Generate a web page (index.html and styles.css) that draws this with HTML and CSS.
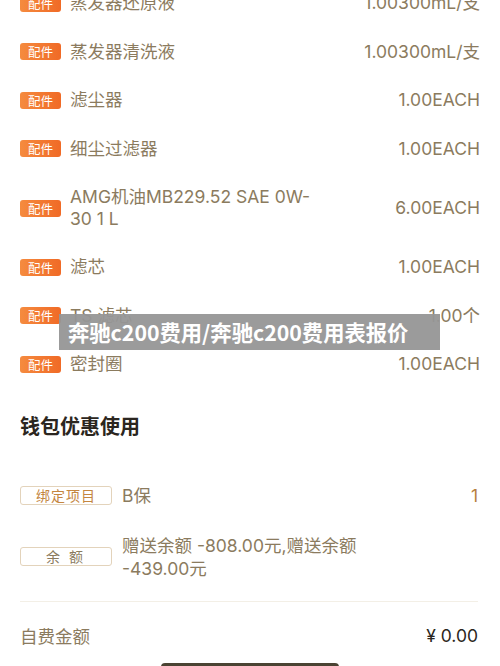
FILE: index.html
```html
<!DOCTYPE html>
<html lang="zh">
<head>
<meta charset="utf-8">
<link rel="stylesheet" href="styles.css">
</head>
<body>
<div class="page">
  <ul class="parts">
    <li class="part"><span class="badge">配件</span><span class="name">蒸发器还原液</span><span class="qty">1.00300mL/支</span></li>
    <li class="part"><span class="badge">配件</span><span class="name">蒸发器清洗液</span><span class="qty">1.00300mL/支</span></li>
    <li class="part"><span class="badge">配件</span><span class="name">滤尘器</span><span class="qty">1.00EACH</span></li>
    <li class="part"><span class="badge">配件</span><span class="name">细尘过滤器</span><span class="qty">1.00EACH</span></li>
    <li class="part"><span class="badge">配件</span><span class="name">AMG机油MB229.52 SAE 0W-30 1 L</span><span class="qty">6.00EACH</span></li>
    <li class="part"><span class="badge">配件</span><span class="name">滤芯</span><span class="qty">1.00EACH</span></li>
    <li class="part"><span class="badge">配件</span><span class="name">TS 滤芯</span><span class="qty">1.00个</span></li>
    <li class="part"><span class="badge">配件</span><span class="name">密封圈</span><span class="qty">1.00EACH</span></li>
  </ul>

  <h2 class="section-title">钱包优惠使用</h2>

  <div class="wallet">
    <div class="wallet-row"><span class="tag tag-bind">绑定项目</span><span class="wval">B保</span><span class="wnum">1</span></div>
    <div class="wallet-row"><span class="tag tag-bal">余 额</span><span class="wval">赠送余额 -808.00元,赠送余额<br>-439.00元</span></div>
  </div>

  <div class="total">
    <span class="total-label">自费金额</span>
    <span class="total-value">¥ 0.00</span>
  </div>

  <div class="home-bar"></div>

  <div class="banner">奔驰c200费用/奔驰c200费用表报价</div>
</div>
</body>
</html>
```

FILE: styles.css
```css
* { box-sizing: border-box; }
html, body { margin: 0; padding: 0; background: #fff; }
body {
  font-family: "Inter", "Noto Sans CJK SC", sans-serif;
  color: #8b7b5e;
  overflow: hidden;
  height: 666px;
}
.page {
  position: relative;
  width: 500px;
  height: 666px;
  overflow: hidden;
}
.parts {
  list-style: none;
  margin: -21px 0 0;
  padding: 0 20px;
}
.part {
  display: flex;
  align-items: center;
  padding: 13px 0;
  min-height: 48.5px;
  font-size: 17.5px;
  line-height: 22px;
}
.badge {
  flex: none;
  width: 41px;
  height: 17px;
  border-radius: 3px;
  background: linear-gradient(90deg, #f58b3f, #f06a26);
  color: #fff;
  font-family: "Noto Sans CJK SC", sans-serif;
  font-size: 12.5px;
  line-height: 17px;
  text-align: center;
  margin-right: 9px;
}
.name {
  flex: 1;
  max-width: 250px;
}
.qty {
  margin-left: auto;
  text-align: right;
}
.section-title {
  margin: 23px 0 0;
  padding: 0 20px;
  font-size: 20px;
  line-height: 28px;
  font-weight: bold;
  color: #2b2620;
  font-family: "Noto Sans CJK SC", sans-serif;
}
.wallet {
  padding: 0 22px 0 20px;
  margin-top: 44px;
}
.wallet-row {
  display: flex;
  align-items: center;
  font-size: 17.5px;
  line-height: 23px;
  margin-bottom: 27px;
}
.wallet-row:last-child { margin-bottom: 21px; }
.tag {
  flex: none;
  width: 92px;
  height: 19px;
  border: 1px solid #e3d3bb;
  border-radius: 3px;
  font-family: "Noto Sans CJK SC", sans-serif;
  font-size: 14px;
  line-height: 17px;
  text-align: center;
  margin-right: 10px;
  letter-spacing: 1px;
}
.tag-bind { color: #c4863f; }
.tag-bal { color: #8b7b5e; letter-spacing: 3px; }
.wnum {
  margin-left: auto;
  color: #b87f3e;
}
.total {
  margin: 0 22px 0 20px;
  border-top: 1px solid #f3efe6;
  display: flex;
  justify-content: space-between;
  align-items: center;
  height: 68px;
  font-size: 17.5px;
}
.total-value { color: #2b2620; }
.home-bar {
  position: absolute;
  left: 161px;
  top: 663px;
  width: 178px;
  height: 8px;
  border-radius: 4px;
  background: #4a4333;
}
.banner {
  position: absolute;
  left: 59px;
  top: 314px;
  width: 381px;
  height: 36px;
  background: rgba(150, 150, 150, 0.95);
  color: #fff;
  font-family: "Noto Sans CJK SC", sans-serif;
  font-weight: bold;
  font-size: 21.3px;
  line-height: 36px;
  padding-left: 9px;
  white-space: nowrap;
}
```
